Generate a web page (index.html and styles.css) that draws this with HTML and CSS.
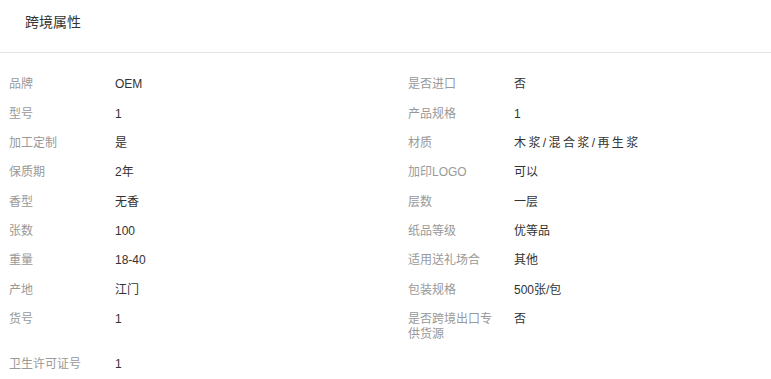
FILE: index.html
```html
<!DOCTYPE html>
<html lang="zh-CN">
<head>
<meta charset="utf-8">
<title>跨境属性</title>
<link rel="stylesheet" href="styles.css">
</head>
<body>
<section class="attr-panel">
  <header class="attr-head">
    <h2 class="attr-title">跨境属性</h2>
  </header>
  <dl class="attr-list">
    <div class="attr-item"><dt class="attr-label">品牌</dt><dd class="attr-value">OEM</dd></div>
    <div class="attr-item"><dt class="attr-label">是否进口</dt><dd class="attr-value">否</dd></div>
    <div class="attr-item"><dt class="attr-label">型号</dt><dd class="attr-value">1</dd></div>
    <div class="attr-item"><dt class="attr-label">产品规格</dt><dd class="attr-value">1</dd></div>
    <div class="attr-item"><dt class="attr-label">加工定制</dt><dd class="attr-value">是</dd></div>
    <div class="attr-item"><dt class="attr-label">材质</dt><dd class="attr-value attr-value-spaced">木浆/混合浆/再生浆</dd></div>
    <div class="attr-item"><dt class="attr-label">保质期</dt><dd class="attr-value">2年</dd></div>
    <div class="attr-item"><dt class="attr-label">加印LOGO</dt><dd class="attr-value">可以</dd></div>
    <div class="attr-item"><dt class="attr-label">香型</dt><dd class="attr-value">无香</dd></div>
    <div class="attr-item"><dt class="attr-label">层数</dt><dd class="attr-value">一层</dd></div>
    <div class="attr-item"><dt class="attr-label">张数</dt><dd class="attr-value">100</dd></div>
    <div class="attr-item"><dt class="attr-label">纸品等级</dt><dd class="attr-value">优等品</dd></div>
    <div class="attr-item"><dt class="attr-label">重量</dt><dd class="attr-value">18-40</dd></div>
    <div class="attr-item"><dt class="attr-label">适用送礼场合</dt><dd class="attr-value">其他</dd></div>
    <div class="attr-item"><dt class="attr-label">产地</dt><dd class="attr-value">江门</dd></div>
    <div class="attr-item"><dt class="attr-label">包装规格</dt><dd class="attr-value">500张/包</dd></div>
    <div class="attr-item"><dt class="attr-label">货号</dt><dd class="attr-value">1</dd></div>
    <div class="attr-item"><dt class="attr-label">是否跨境出口专供货源</dt><dd class="attr-value">否</dd></div>
    <div class="attr-item"><dt class="attr-label">卫生许可证号</dt><dd class="attr-value">1</dd></div>
  </dl>
</section>
</body>
</html>
```

FILE: styles.css
```css
html, body {
  margin: 0;
  padding: 0;
  background: #fff;
}

body {
  font-family: "Liberation Sans", "Noto Sans CJK SC", Arial, sans-serif;
  font-size: 12px;
  color: #333;
}

.attr-head {
  padding: 12px 25px 20px;
  border-bottom: 1px solid #e5e5e5;
}

.attr-title {
  margin: 0;
  font-size: 14px;
  line-height: 20px;
  font-weight: normal;
  color: #333;
}

.attr-list {
  margin: 0;
  padding: 17px 0 0;
  display: grid;
  grid-template-columns: 399px 1fr;
}

.attr-item {
  display: flex;
  align-items: flex-start;
  padding: 7.2px 0 7.2px 9px;
  line-height: 15px;
}

.attr-label {
  flex: 0 0 90px;
  margin: 0 16px 0 0;
  color: #999;
}

.attr-value {
  margin: 0;
  color: #333;
}

/* the material value is set with wide tracking */
.attr-value-spaced {
  letter-spacing: 2.4px;
}
```
